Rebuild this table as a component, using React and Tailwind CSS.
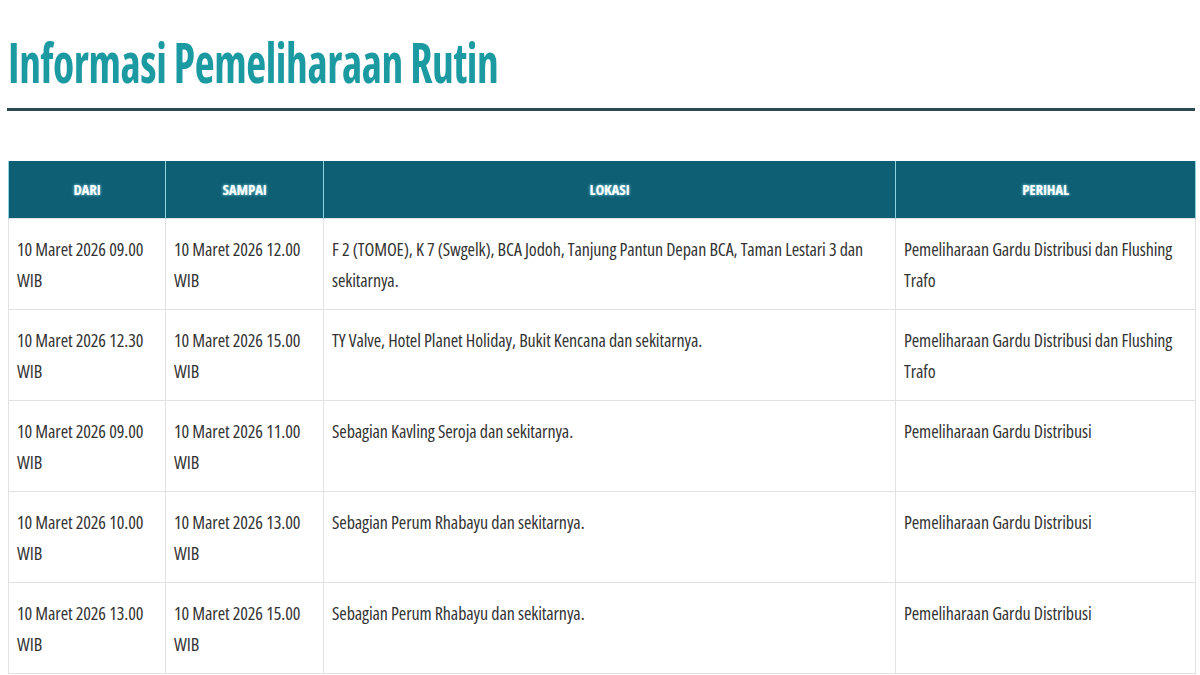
import React from "react";

const rows = [
  ["10 Maret 2026 09.00 WIB", "10 Maret 2026 12.00 WIB", "F 2 (TOMOE), K 7 (Swgelk), BCA Jodoh, Tanjung Pantun Depan BCA, Taman Lestari 3 dan sekitarnya.", "Pemeliharaan Gardu Distribusi dan Flushing Trafo"],
  ["10 Maret 2026 12.30 WIB", "10 Maret 2026 15.00 WIB", "TY Valve, Hotel Planet Holiday, Bukit Kencana dan sekitarnya.", "Pemeliharaan Gardu Distribusi dan Flushing Trafo"],
  ["10 Maret 2026 09.00 WIB", "10 Maret 2026 11.00 WIB", "Sebagian Kavling Seroja dan sekitarnya.", "Pemeliharaan Gardu Distribusi"],
  ["10 Maret 2026 10.00 WIB", "10 Maret 2026 13.00 WIB", "Sebagian Perum Rhabayu dan sekitarnya.", "Pemeliharaan Gardu Distribusi"],
  ["10 Maret 2026 13.00 WIB", "10 Maret 2026 15.00 WIB", "Sebagian Perum Rhabayu dan sekitarnya.", "Pemeliharaan Gardu Distribusi"],
];

export default function App() {
  return (
    <div className="w-[1200px] h-[675px] overflow-hidden bg-white font-['Open_Sans',sans-serif] [font-stretch:75%]">
      <div className="pl-[8px] pr-[5px] pt-[30px]">
        <h1 className="inline-block origin-left scale-x-[0.79] whitespace-nowrap text-[55px] leading-[64px] font-bold text-[#1b9aa2] tracking-[-0.5px]">
          Informasi Pemeliharaan Rutin
        </h1>
        <div className="mt-[14px] h-[3px] bg-[#2c4a4f] -ml-[1px]" />
        <table className="mt-[50px] w-[1187px] table-fixed border-collapse">
          <colgroup>
            <col className="w-[157px]" />
            <col className="w-[158px]" />
            <col className="w-[572px]" />
            <col className="w-[300px]" />
          </colgroup>
          <thead>
            <tr className="h-[57px] bg-[#0e5f74]">
              {["DARI", "SAMPAI", "LOKASI", "PERIHAL"].map((h) => (
                <th
                  key={h}
                  className="border-x border-[#8fd3df] text-center text-[15px] font-bold text-white tracking-[-0.2px] [text-shadow:0_0_3px_#9fe6f2]"
                >
                  {h}
                </th>
              ))}
            </tr>
          </thead>
          <tbody>
            {rows.map((r, i) => (
              <tr key={i} className="h-[91px]">
                {r.map((c, j) => (
                  <td
                    key={j}
                    className="border border-[#e2e2e2] align-top px-[8px] pt-[15px] pb-[13px] text-[18px] leading-[31px] text-[#333] tracking-[-0.1px]"
                  >
                    {c}
                  </td>
                ))}
              </tr>
            ))}
          </tbody>
        </table>
      </div>
    </div>
  );
}
